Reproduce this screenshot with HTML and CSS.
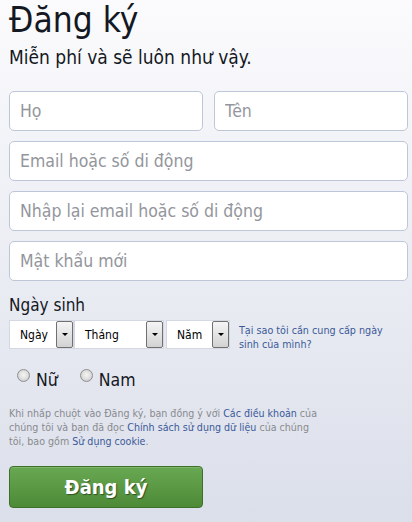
FILE: index.html
```html
<!DOCTYPE html>
<html lang="vi">
<head>
<meta charset="utf-8">
<title>Đăng ký</title>
<link rel="stylesheet" href="styles.css">
</head>
<body>
<main class="signup">
  <h1 class="title">Đăng ký</h1>
  <p class="subtitle">Miễn phí và sẽ luôn như vậy.</p>
  <form class="form" onsubmit="return false">
    <div class="name-row">
      <input class="field" type="text" placeholder="Họ">
      <input class="field" type="text" placeholder="Tên">
    </div>
    <input class="field" type="text" placeholder="Email hoặc số di động">
    <input class="field" type="text" placeholder="Nhập lại email hoặc số di động">
    <input class="field" type="password" placeholder="Mật khẩu mới">

    <div class="birthday">
      <div class="label">Ngày sinh</div>
      <div class="bday-row">
        <div class="selects">
          <div class="select sel-day"><span class="sel-text">Ngày</span><span class="arrow"><span class="tri"></span></span></div>
          <div class="select sel-month"><span class="sel-text">Tháng</span><span class="arrow"><span class="tri"></span></span></div>
          <div class="select sel-year"><span class="sel-text">Năm</span><span class="arrow"><span class="tri"></span></span></div>
        </div>
        <a class="why" href="#">Tại sao tôi cần cung cấp ngày<br>sinh của mình?</a>
      </div>
    </div>

    <div class="gender">
      <label class="opt opt-f"><input class="radio" type="radio" name="sex"><span>Nữ</span></label>
      <label class="opt"><input class="radio" type="radio" name="sex"><span>Nam</span></label>
    </div>

    <p class="terms">Khi nhấp chuột vào Đăng ký, bạn đồng ý với <a href="#">Các điều khoản</a> của<br>chúng tôi và bạn đã đọc <a href="#">Chính sách sử dụng dữ liệu</a> của chúng<br>tôi, bao gồm <a href="#">Sử dụng cookie</a>.</p>

    <button class="submit" type="submit">Đăng ký</button>
  </form>
</main>
</body>
</html>
```
FILE: styles.css
```css
html {
  height: 100%;
  background: linear-gradient(#fbfbfd, #dbdfea);
}
body {
  margin: 0;
  font-family: "DejaVu Sans Condensed", "DejaVu Sans", sans-serif;
  font-stretch: condensed;
  color: #141823;
}
.signup {
  padding: 0 4px 0 9px;
}
.title {
  margin: 0;
  font-size: 35px;
  font-weight: normal;
  line-height: 41px;
}
.subtitle {
  margin: 5px 0 0;
  font-size: 19px;
  line-height: 22px;
}
.form {
  margin-top: 23px;
  display: flex;
  flex-direction: column;
}
.name-row {
  display: grid;
  grid-template-columns: 1fr 1fr;
  column-gap: 11px;
}
.field {
  box-sizing: border-box;
  width: 100%;
  height: 40px;
  margin: 0 0 10px;
  padding: 0 10px;
  border: 1px solid #bdc7d8;
  border-radius: 5px;
  background: #fff;
  font-family: inherit;
  font-stretch: condensed;
  font-size: 17.5px;
  color: #141823;
}
.field::placeholder { color: #93969c; }
.birthday { margin-top: 4px; }
.label {
  font-size: 17px;
  line-height: 20px;
}
.bday-row {
  display: flex;
  align-items: flex-start;
  margin-top: 5px;
}
.selects { display: flex; }
.select {
  box-sizing: border-box;
  height: 29px;
  display: flex;
  align-items: center;
  justify-content: space-between;
  background: #fff;
  border: 1px solid #d3d8e3;
  font-size: 12px;
  color: #000;
}
.sel-day { width: 65px; }
.sel-month { width: 90px; }
.sel-year { width: 64px; margin-left: 2px; }
.sel-text { padding-left: 10px; }
.arrow {
  box-sizing: border-box;
  width: 17px;
  height: 27px;
  border: 1px solid #707070;
  border-radius: 2px;
  background: linear-gradient(#f5f5f5, #d2d2d2);
  display: flex;
  align-items: center;
  justify-content: center;
}
.tri {
  width: 0;
  height: 0;
  border-left: 3px solid transparent;
  border-right: 3px solid transparent;
  border-top: 3px solid #000;
}
.why {
  margin: 4px 0 0 9px;
  font-size: 10.7px;
  line-height: 14px;
  color: #3b5998;
  text-decoration: none;
}
.gender {
  display: flex;
  margin-top: 18px;
  padding-left: 8px;
}
.opt {
  display: flex;
  align-items: flex-start;
  gap: 6px;
  font-size: 17.5px;
  line-height: 20px;
}
.opt-f { margin-right: 22px; }
.radio {
  appearance: none;
  -webkit-appearance: none;
  box-sizing: border-box;
  width: 13px;
  height: 13px;
  margin: -1px 0 0;
  border: 1px solid #8f9090;
  border-radius: 50%;
  background: radial-gradient(circle at 50% 45%, #f4f4f4 0, #e2e2e2 45%, #bdbdbd 100%);
}
.terms {
  margin: 16px 0 0;
  font-size: 10.6px;
  line-height: 14px;
  color: #888a8e;
}
.terms a {
  color: #3b5998;
  text-decoration: none;
}
.submit {
  box-sizing: border-box;
  width: 194px;
  height: 42px;
  margin-top: 18px;
  border: 1px solid #3e7027;
  border-radius: 4px;
  background: linear-gradient(#69a853, #4d8a37);
  box-shadow: inset 0 1px 0 rgba(255,255,255,.15);
  font-family: inherit;
  font-stretch: condensed;
  font-size: 20px;
  font-weight: bold;
  color: #fff;
  text-shadow: 1px 1px 1px rgba(0,0,0,.45);
  cursor: pointer;
}
```
